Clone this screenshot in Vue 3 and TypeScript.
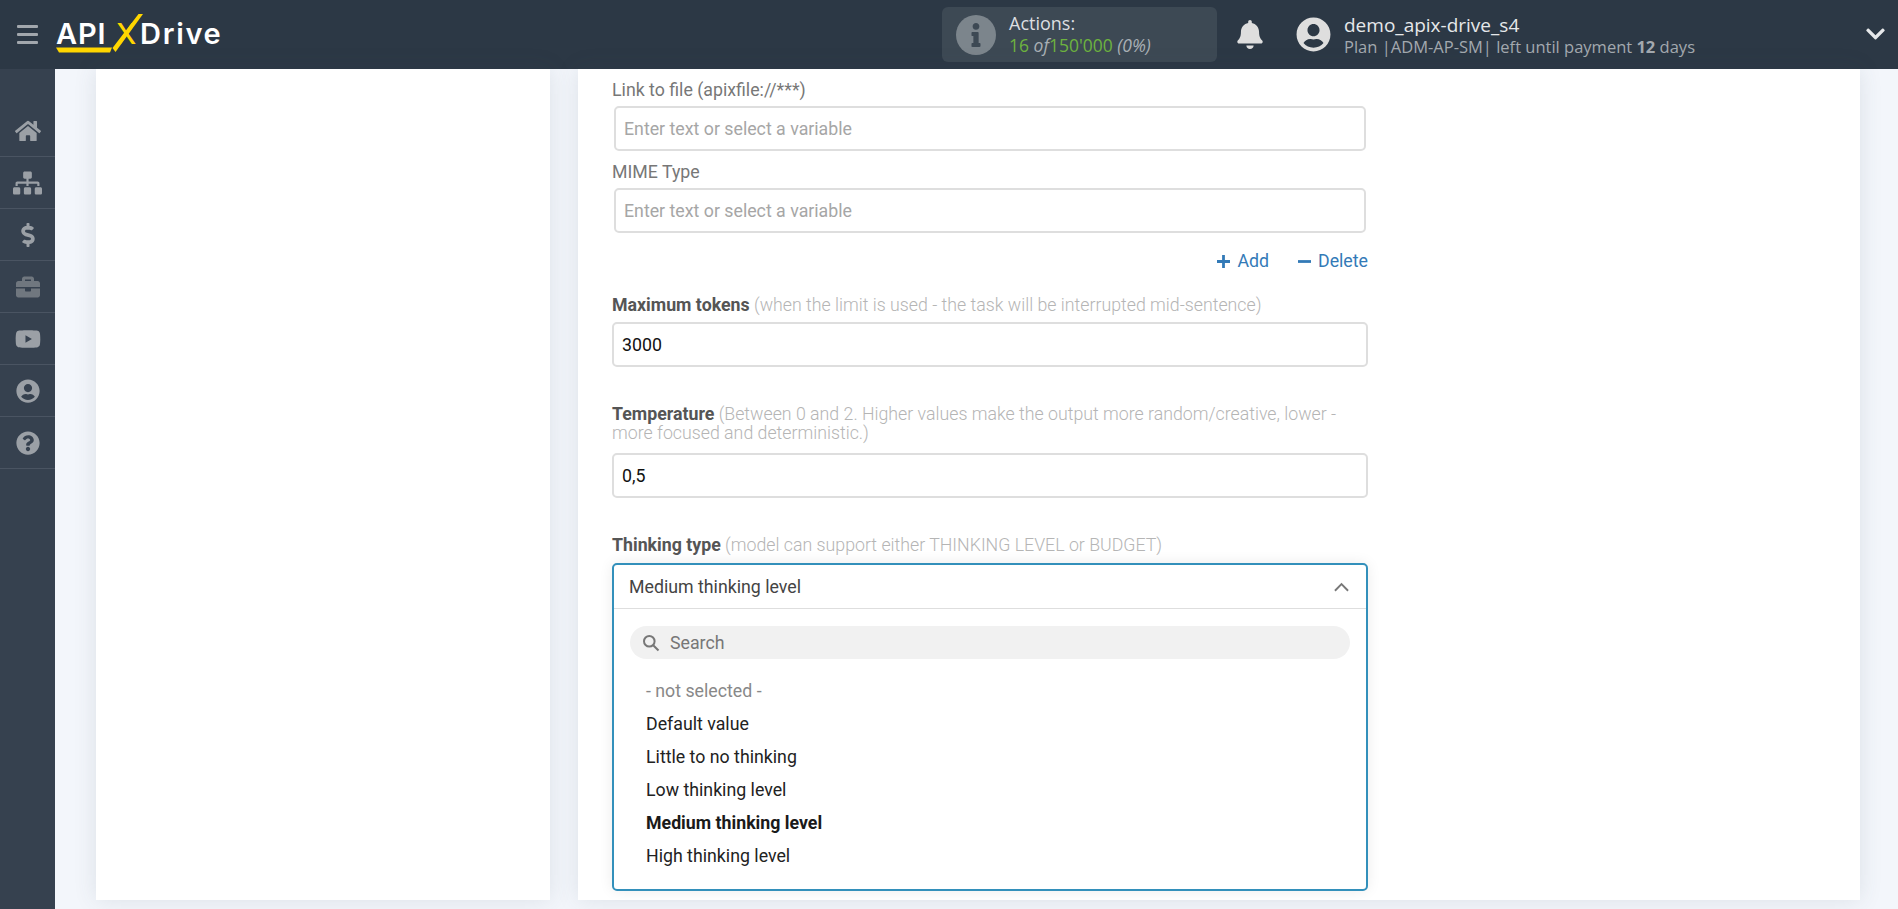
<script setup lang="ts">
interface NavItem {
  name: string
  box: string
  d: string
  dim?: boolean
}

const navItems: NavItem[] = [
  {
    name: 'home',
    box: '0 0 576 512',
    d: 'M280.37 148.26L96 300.11V464a16 16 0 0 0 16 16l112.06-.29a16 16 0 0 0 15.92-16V368a16 16 0 0 1 16-16h64a16 16 0 0 1 16 16v95.64a16 16 0 0 0 16 16.05L464 480a16 16 0 0 0 16-16V300L295.67 148.26a12.19 12.19 0 0 0-15.3 0zM571.6 251.47L488 182.56V44.05a12 12 0 0 0-12-12h-56a12 12 0 0 0-12 12v72.61L318.47 43a48 48 0 0 0-61 0L4.34 251.47a12 12 0 0 0-1.6 16.9l25.5 31A12 12 0 0 0 45.15 301l235.22-193.74a12.19 12.19 0 0 1 15.3 0L530.9 301a12 12 0 0 0 16.9-1.6l25.5-31a12 12 0 0 0-1.7-16.93z',
  },
  {
    name: 'sitemap',
    box: '0 0 640 512',
    d: 'M128 352H32c-17.67 0-32 14.33-32 32v96c0 17.67 14.33 32 32 32h96c17.67 0 32-14.33 32-32v-96c0-17.67-14.33-32-32-32zm-24-80h192v48h48v-48h192v48h48v-57.59c0-21.17-17.23-38.41-38.41-38.41H344v-64h40c17.67 0 32-14.33 32-32V32c0-17.67-14.33-32-32-32H256c-17.67 0-32 14.33-32 32v96c0 17.67 14.33 32 32 32h40v64H94.41C73.23 224 56 241.23 56 262.41V320h48v-48zm264 80h-96c-17.67 0-32 14.33-32 32v96c0 17.67 14.33 32 32 32h96c17.67 0 32-14.33 32-32v-96c0-17.67-14.33-32-32-32zm240 0h-96c-17.67 0-32 14.33-32 32v96c0 17.67 14.33 32 32 32h96c17.67 0 32-14.33 32-32v-96c0-17.67-14.33-32-32-32z',
  },
  {
    name: 'billing',
    box: '0 0 288 512',
    d: 'M209.2 233.4l-108-31.6C88.7 198.2 80 186.5 80 173.5c0-16.3 13.2-29.5 29.5-29.5h66.3c12.2 0 24.2 3.7 34.2 10.5 6.1 4.1 14.3 3.1 19.5-2l34.8-34c7.1-6.9 6.1-18.4-1.8-24.5C238 74.8 207.4 64.1 176 64V16c0-8.8-7.2-16-16-16h-32c-8.8 0-16 7.2-16 16v48h-2.5C45.8 64-5.4 118.7.5 183.6c4.2 46.1 39.4 83.6 83.8 96.6l102.5 30c12.5 3.7 21.2 15.3 21.2 28.3 0 16.3-13.2 29.5-29.5 29.5h-66.3C100 368 88 364.3 78 357.5c-6.1-4.1-14.3-3.1-19.5 2l-34.8 34c-7.1 6.9-6.1 18.4 1.8 24.5 24.5 19.2 55.1 29.9 86.5 30v48c0 8.8 7.2 16 16 16h32c8.8 0 16-7.2 16-16v-48.2c46.6-.9 90.3-28.6 105.7-72.7 21.5-61.6-14.6-124.8-72.5-141.7z',
  },
  {
    name: 'briefcase',
    box: '0 0 512 512',
    dim: true,
    d: 'M320 336c0 8.84-7.16 16-16 16h-96c-8.84 0-16-7.16-16-16v-48H0v144c0 25.6 22.4 48 48 48h416c25.6 0 48-22.4 48-48V288H320v48zm144-208h-80V80c0-25.6-22.4-48-48-48H176c-25.6 0-48 22.4-48 48v48H48c-25.6 0-48 22.4-48 48v80h512v-80c0-25.6-22.4-48-48-48zm-144 0H192V96h128v32z',
  },
  {
    name: 'video',
    box: '0 0 576 512',
    d: 'M549.655 124.083c-6.281-23.65-24.787-42.276-48.284-48.597C458.781 64 288 64 288 64S117.22 64 74.629 75.486c-23.497 6.322-42.003 24.947-48.284 48.597-11.412 42.867-11.412 132.305-11.412 132.305s0 89.438 11.412 132.305c6.281 23.65 24.787 41.5 48.284 47.821C117.22 448 288 448 288 448s170.78 0 213.371-11.486c23.497-6.321 42.003-24.171 48.284-47.821 11.412-42.867 11.412-132.305 11.412-132.305s0-89.438-11.412-132.305zm-317.51 213.508V175.185l142.739 81.205-142.739 81.201z',
  },
  {
    name: 'account',
    box: '0 0 496 512',
    d: 'M248 8C111 8 0 119 0 256s111 248 248 248 248-111 248-248S385 8 248 8zm0 96c48.6 0 88 39.4 88 88s-39.4 88-88 88-88-39.4-88-88 39.4-88 88-88zm0 344c-58.7 0-111.3-26.6-146.5-68.2 18.8-35.4 55.6-59.8 98.5-59.8 2.4 0 4.8.4 7.1 1.1 13 4.2 26.6 6.9 40.9 6.9 14.3 0 28-2.7 40.9-6.9 2.3-.7 4.7-1.1 7.1-1.1 42.9 0 79.7 24.4 98.5 59.8C359.3 421.4 306.7 448 248 448z',
  },
  {
    name: 'help',
    box: '0 0 512 512',
    d: 'M504 256c0 136.997-111.043 248-248 248S8 392.997 8 256C8 119.083 119.043 8 256 8s248 111.083 248 248zM262.655 90c-54.497 0-89.255 22.957-116.549 63.758-3.536 5.286-2.353 12.415 2.715 16.258l34.699 26.31c5.205 3.947 12.621 3.008 16.665-2.122 17.864-22.658 30.113-35.797 57.303-35.797 20.429 0 45.698 13.148 45.698 32.958 0 14.976-12.363 22.667-32.534 33.976C247.128 238.528 216 254.941 216 296v4c0 6.627 5.373 12 12 12h56c6.627 0 12-5.373 12-12v-1.333c0-28.462 83.186-29.647 83.186-106.667 0-58.002-60.165-102-116.531-102zM256 338c-25.365 0-46 20.635-46 46 0 25.364 20.635 46 46 46s46-20.636 46-46c0-25.365-20.635-46-46-46z',
  },
]

const userPath = navItems[5].d

const options = [
  { label: '- not selected -', muted: true },
  { label: 'Default value' },
  { label: 'Little to no thinking' },
  { label: 'Low thinking level' },
  { label: 'Medium thinking level', active: true },
  { label: 'High thinking level' },
]
</script>

<template>
  <div class="app">
    <header class="topbar">
      <div class="burger"><i /><i /><i /></div>
      <div class="logo">
        <span class="logo-api">API</span>
        <span class="logo-x">X</span>
        <span class="logo-drive">Drive</span>
        <svg class="logo-mark" viewBox="0 0 170 42" aria-hidden="true">
          <polygon points="0,33.5 56,33.5 54,38.5 3,38.5" fill="#ffd600" />
          <polygon points="82.5,0 87,0 59.5,38 56.5,34" fill="#ffd600" />
        </svg>
      </div>

      <div class="actions">
        <span class="info-dot">
          <svg viewBox="0 0 192 512"><path d="M20 424.229h20V279.771H20c-11.046 0-20-8.954-20-20V212c0-11.046 8.954-20 20-20h112c11.046 0 20 8.954 20 20v212.229h20c11.046 0 20 8.954 20 20V492c0 11.046-8.954 20-20 20H20c-11.046 0-20-8.954-20-20v-47.771c0-11.046 8.954-20 20-20zM96 0C56.235 0 24 32.235 24 72s32.235 72 72 72 72-32.235 72-72S135.764 0 96 0z" /></svg>
        </span>
        <div class="actions-text">
          <div class="actions-title">Actions:</div>
          <div class="actions-count">16 <em>of</em>150'000 <em>(0%)</em></div>
        </div>
      </div>

      <svg class="bell" viewBox="0 0 448 512"><path d="M224 512c35.32 0 63.97-28.65 63.97-64H160.03c0 35.35 28.65 64 63.97 64zm215.39-149.71c-19.32-20.76-55.47-51.99-55.47-154.29 0-77.7-54.48-139.9-127.94-155.16V32c0-17.67-14.32-32-31.98-32s-31.98 14.33-31.98 32v20.84C118.56 68.1 64.08 130.3 64.08 208c0 102.3-36.15 133.53-55.47 154.29-6 6.45-8.66 14.16-8.61 21.71.11 16.4 12.98 32 32.1 32h383.8c19.12 0 32-15.6 32.1-32 .05-7.55-2.61-15.27-8.61-21.71z" /></svg>

      <svg class="avatar" viewBox="0 0 496 512"><path :d="userPath" /></svg>
      <div class="user">
        <div class="user-name">demo_apix-drive_s4</div>
        <div class="user-plan">Plan |ADM-AP-SM| left until payment <b>12</b> days</div>
      </div>
      <svg class="caret" viewBox="0 0 448 512"><path d="M207.029 381.476L12.686 187.132c-9.373-9.373-9.373-24.569 0-33.941l22.667-22.667c9.357-9.357 24.522-9.375 33.901-.04L224 284.505l154.745-154.021c9.379-9.335 24.544-9.317 33.901.04l22.667 22.667c9.373 9.373 9.373 24.569 0 33.941L240.971 381.476c-9.373 9.372-24.569 9.372-33.942 0z" /></svg>
    </header>

    <div class="body">
      <nav class="sidebar">
        <div v-for="item in navItems" :key="item.name" class="nav-item">
          <svg :class="['nav-icon', `nav-${item.name}`, { dim: item.dim }]" :viewBox="item.box"><path :d="item.d" /></svg>
        </div>
      </nav>

      <main class="content">
        <section class="card card-left" />

        <section class="card card-main">
          <div class="form">
            <div class="inset">
              <label class="plain-label">Link to file (apixfile://***)</label>
              <div class="input placeholder">Enter text or select a variable</div>
              <label class="plain-label second">MIME Type</label>
              <div class="input placeholder">Enter text or select a variable</div>
            </div>

            <div class="links">
              <span class="link"><svg viewBox="0 0 14 14"><path d="M5.5 0h3v5.5H14v3H8.5V14h-3V8.5H0v-3h5.5z" /></svg>Add</span>
              <span class="link"><svg viewBox="0 0 14 14"><path d="M0 5.5h14v3H0z" /></svg>Delete</span>
            </div>

            <div class="field tokens">
              <label class="label"><b>Maximum tokens</b> (when the limit is used - the task will be interrupted mid-sentence)</label>
              <div class="input">3000</div>
            </div>

            <div class="field temperature">
              <label class="label"><b>Temperature</b> (Between 0 and 2. Higher values make the output more random/creative, lower - more focused and deterministic.)</label>
              <div class="input">0,5</div>
            </div>

            <div class="field thinking">
              <label class="label"><b>Thinking type</b> (model can support either THINKING LEVEL or BUDGET)</label>
              <div class="select">
                <div class="select-head">
                  <span>Medium thinking level</span>
                  <svg class="select-arrow" viewBox="0 0 16 10"><path d="M1 9l7-7 7 7" /></svg>
                </div>
                <div class="select-body">
                  <div class="search">
                    <svg viewBox="0 0 18 18"><circle cx="7.3" cy="7.3" r="5.3" /><path d="M11.2 11.2l5.3 5.3" /></svg>
                    <span>Search</span>
                  </div>
                  <ul class="options">
                    <li v-for="opt in options" :key="opt.label" :class="{ muted: opt.muted, active: opt.active }">{{ opt.label }}</li>
                  </ul>
                </div>
              </div>
            </div>
          </div>
        </section>
      </main>
    </div>
  </div>
</template>

<style>
html,
body {
  margin: 0;
  overflow: hidden;
}
</style>

<style scoped>
.app {
  display: flex;
  flex-direction: column;
  height: 909px;
  overflow: hidden;
  background: #f3f6fb;
  font-family: Roboto, "Liberation Sans", sans-serif;
}

.topbar {
  display: flex;
  align-items: center;
  flex: 0 0 69px;
  background: #2c3845;
  font-family: "Open Sans", sans-serif;
}
.burger {
  display: flex;
  flex-direction: column;
  gap: 5px;
  width: 21px;
  margin-left: 17px;
}
.burger i {
  display: block;
  height: 3px;
  border-radius: 1px;
  background: #a2a7ad;
}
.logo {
  position: relative;
  display: flex;
  align-items: baseline;
  width: 170px;
  height: 42px;
  margin-left: 18px;
  font-family: Inter, sans-serif;
  font-size: 29px;
  font-weight: 600;
  line-height: 40px;
  color: #fff;
}
.logo-api {
  width: 60px;
  letter-spacing: 0.9px;
}
.logo-x {
  width: 24px;
  font-weight: 500;
  color: #ffd600;
}
.logo-drive {
  letter-spacing: 1.7px;
}
.logo-mark {
  position: absolute;
  top: 0;
  left: 0;
  width: 170px;
  height: 42px;
}
.actions {
  display: flex;
  align-items: center;
  width: 275px;
  height: 55px;
  margin-left: 716px;
  border-radius: 6px;
  background: #3d4954;
  box-sizing: border-box;
  padding-left: 14px;
}
.info-dot {
  display: flex;
  align-items: center;
  justify-content: center;
  width: 40px;
  height: 40px;
  border-radius: 50%;
  background: #7c858c;
}
.info-dot svg {
  width: 10px;
  height: 24px;
  fill: #3d4954;
}
.actions-text {
  margin-bottom: 2px;
  margin-left: 13px;
  font-size: 18px;
  line-height: 22px;
}
.actions-title {
  color: #dcdfe1;
}
.actions-count {
  color: #6db33f;
  font-size: 17.5px;
}
.actions-count em {
  color: #a9b0b5;
}
.bell {
  width: 26px;
  height: 29px;
  margin-left: 20px;
  fill: #dedede;
}
.avatar {
  width: 35px;
  height: 35px;
  margin-left: 33px;
  fill: #dedede;
}
.user {
  margin-top: 2px;
  margin-left: 13px;
  line-height: 22px;
}
.user-name {
  font-size: 19px;
  color: #e6e8ea;
}
.user-plan {
  font-size: 16.5px;
  color: #a3a9af;
}
.user-plan b {
  font-weight: 700;
}
.caret {
  position: absolute;
  top: 23px;
  right: 13px;
  width: 19px;
  height: 22px;
  fill: #e6e8ea;
}

.body {
  display: flex;
  flex: 1;
  min-height: 0;
}
.sidebar {
  flex: 0 0 55px;
  padding-top: 36px;
  background: #36414f;
}
.nav-item {
  display: flex;
  align-items: center;
  justify-content: center;
  height: 52px;
  box-sizing: border-box;
  border-bottom: 1px solid #4a5462;
}
.nav-icon {
  width: 26px;
  height: 26px;
  fill: #9ba0a6;
}
.nav-icon.dim {
  fill: #70777f;
}
.nav-sitemap {
  width: 29px;
}
.nav-billing {
  height: 24px;
}
.nav-briefcase {
  width: 24px;
}
.nav-help,
.nav-account {
  width: 24px;
  height: 24px;
}

.content {
  display: flex;
  flex: 1;
  gap: 28px;
  align-items: flex-start;
  padding-left: 41px;
  padding-right: 38px;
}
.card {
  height: 831px;
  background: #fff;
  box-shadow: 0 0 22px rgba(60, 70, 90, 0.12);
}
.card-left {
  flex: 0 0 454px;
}
.card-main {
  flex: 1;
  padding-left: 34px;
}

.form {
  width: 756px;
  padding-top: 11px;
  font-size: 17.75px;
}
.inset {
  padding: 0 2px;
}
.plain-label {
  display: block;
  height: 20px;
  margin-bottom: 6px;
  margin-left: -2px;
  line-height: 21px;
  color: #777;
}
.plain-label.second {
  margin-top: 11px;
}
.input {
  height: 45px;
  box-sizing: border-box;
  padding-left: 8px;
  border: 2px solid #dedede;
  border-radius: 5px;
  background: #fff;
  line-height: 43px;
  color: #111;
}
.input.placeholder {
  color: #a6a6a6;
}
.links {
  display: flex;
  justify-content: flex-end;
  gap: 29px;
  height: 20px;
  margin-top: 18px;
  line-height: 20px;
  color: #337ab7;
}
.link {
  display: flex;
  align-items: center;
  gap: 7px;
}
.link svg {
  width: 13px;
  height: 13px;
  fill: #337ab7;
}
.label {
  display: block;
  font-weight: 300;
  line-height: 19.5px;
  color: #b5b5b5;
}
.label b {
  font-weight: 700;
  color: #555;
}
.tokens {
  margin-top: 25px;
}
.tokens .label {
  margin-bottom: 6px;
}
.temperature {
  margin-top: 38px;
}
.temperature .label {
  margin-bottom: 9px;
}
.thinking {
  margin-top: 38px;
}
.thinking .label {
  margin-bottom: 8px;
}

.select {
  height: 328px;
  box-sizing: border-box;
  border: 2px solid #3390bb;
  border-radius: 5px;
  background: #fff;
  box-shadow: 0 0 14px rgba(0, 0, 0, 0.08);
}
.select-head {
  display: flex;
  align-items: center;
  justify-content: space-between;
  height: 44px;
  box-sizing: border-box;
  padding: 0 17px 0 15px;
  border-bottom: 1px solid #dedede;
  color: #444;
}
.select-arrow {
  width: 15px;
  height: 10px;
  fill: none;
  stroke: #777;
  stroke-width: 2;
}
.select-body {
  padding: 17px 16px 0 16px;
}
.search {
  display: flex;
  align-items: center;
  gap: 10px;
  height: 33px;
  padding-left: 12px;
  border-radius: 17px;
  background: #f1f1f1;
  color: #777;
}
.search svg {
  width: 18px;
  height: 18px;
  fill: none;
  stroke: #777;
  stroke-width: 2;
}
.options {
  margin: 16px 0 0;
  padding: 0 0 0 16px;
  list-style: none;
}
.options li {
  height: 33px;
  line-height: 33px;
  color: #222;
}
.options li.muted {
  color: #888;
}
.options li.active {
  font-weight: 700;
  color: #1a1a1a;
}
</style>
